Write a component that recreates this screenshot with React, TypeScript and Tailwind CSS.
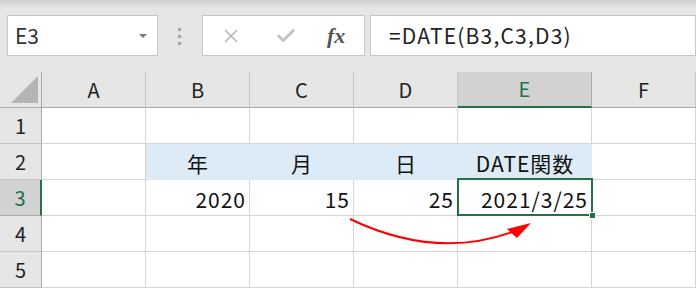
import { X, Check } from "lucide-react";

const cols = ["A", "B", "C", "D", "E", "F"];

export default function App() {
  const rows = [1, 2, 3, 4, 5];

  const cell = (r: number, c: string) => {
    if (r === 2 && c !== "A" && c !== "F") {
      const txt: Record<string, string> = { B: "年", C: "月", D: "日", E: "DATE関数" };
      return (
        <div key={c} className="h-9 bg-[#ddebf7] flex items-center justify-center text-[21px] tracking-[1px] text-[#111] pt-1">
          {txt[c]}
        </div>
      );
    }
    const val: Record<string, string> = { B: "2020", C: "15", D: "25", E: "2021/3/25" };
    return (
      <div key={c} className="h-9 border-r border-b border-[#d4d4d4] bg-white flex items-center justify-end pr-[3px] text-[21px] tracking-[1px] text-[#111] pt-1">
        {r === 3 ? val[c] : ""}
      </div>
    );
  };

  return (
    <div
      className="w-[696px] h-[288px] overflow-hidden bg-[#e6e6e6] relative"
      style={{ fontFamily: '"Noto Sans CJK JP", "Liberation Sans", sans-serif' }}
    >
      {/* toolbar */}
      <div className="h-[72px] bg-gradient-to-b from-[#cfcfcf] via-[#e6e6e6] via-[12%] to-[#e6e6e6] flex items-start pt-[15px]">
        <div className="ml-[7px] w-[151px] h-[41px] bg-white border border-[#c6c6c6] flex items-center pl-[7px] pr-[10px] justify-between">
          <span className="text-[21px] text-[#333] leading-none">E3</span>
          <span className="w-0 h-0 border-l-[4px] border-r-[4px] border-t-[4px] border-l-transparent border-r-transparent border-t-[#777]" />
        </div>
        <div className="ml-[20px] mt-[13px] flex flex-col gap-[4px]">
          <span className="w-[3px] h-[3px] bg-[#a6a6a6]" />
          <span className="w-[3px] h-[3px] bg-[#a6a6a6]" />
          <span className="w-[3px] h-[3px] bg-[#a6a6a6]" />
        </div>
        <div className="ml-[21px] w-[163px] h-[41px] bg-white border border-[#c6c6c6] flex items-center">
          <X className="ml-[17px] w-[22px] h-[22px] text-[#b8b8b8]" strokeWidth={1.8} />
          <Check className="ml-[33px] w-[22px] h-[22px] text-[#c2c2c2]" strokeWidth={3.2} />
          <span
            className="ml-[30px] text-[22px] text-[#555] italic font-semibold leading-none"
            style={{ fontFamily: '"Liberation Serif", serif' }}
          >
            fx
          </span>
        </div>
        <div className="ml-[5px] flex-1 h-[41px] bg-white border border-[#c6c6c6] flex items-center pl-[18px] text-[21px] tracking-[1.2px] text-[#222] leading-none">
          =DATE(B3,C3,D3)
        </div>
      </div>

      {/* grid */}
      <div className="grid grid-cols-[42px_104px_104px_104px_104px_134px_104px]">
        <div className="h-9 border-r border-b border-[#ababab] bg-[#e6e6e6] flex items-end justify-end pr-[3px] pb-[4px]">
          <svg width="27" height="27" viewBox="0 0 27 27">
            <polygon points="27,0 27,27 0,27" fill="#b4b4b4" />
          </svg>
        </div>
        {cols.map((c) => (
          <div
            key={c}
            className={
              c === "E"
                ? "h-9 bg-[#d2d2d2] border-r border-r-[#ababab] border-b-2 border-b-[#217346] flex items-center justify-center text-[20px] text-[#217346]"
                : "h-9 bg-[#e6e6e6] border-r border-r-[#c6c6c6] border-b border-b-[#ababab] flex items-center justify-center text-[20px] text-[#222]"
            }
          >
            {c}
          </div>
        ))}
        {rows.map((r) => (
          <div key={r} className="contents">
            <div
              className={
                r === 3
                  ? "h-9 bg-[#d2d2d2] border-r-2 border-r-[#217346] border-b border-b-[#ababab] flex items-center justify-center text-[20px] text-[#217346]"
                  : "h-9 bg-[#e6e6e6] border-r border-r-[#ababab] border-b border-b-[#c6c6c6] flex items-center justify-center text-[20px] text-[#222]"
              }
            >
              {r}
            </div>
            {cols.map((c) => cell(r, c))}
          </div>
        ))}
      </div>

      {/* selection */}
      <div className="absolute left-[457px] top-[178px] w-[136px] h-[38px] border-2 border-[#217346]" />
      <div className="absolute left-[589px] top-[212px] w-[7px] h-[7px] bg-[#217346] border border-white" />

      {/* arrow */}
      <svg className="absolute left-0 top-0 pointer-events-none" width="696" height="288">
        <path d="M350 219 Q 440 262 520 229" stroke="#ff0000" strokeWidth="2" fill="none" />
        <polygon points="531,223 507,229 517,238" fill="#ff0000" />
      </svg>
    </div>
  );
}
